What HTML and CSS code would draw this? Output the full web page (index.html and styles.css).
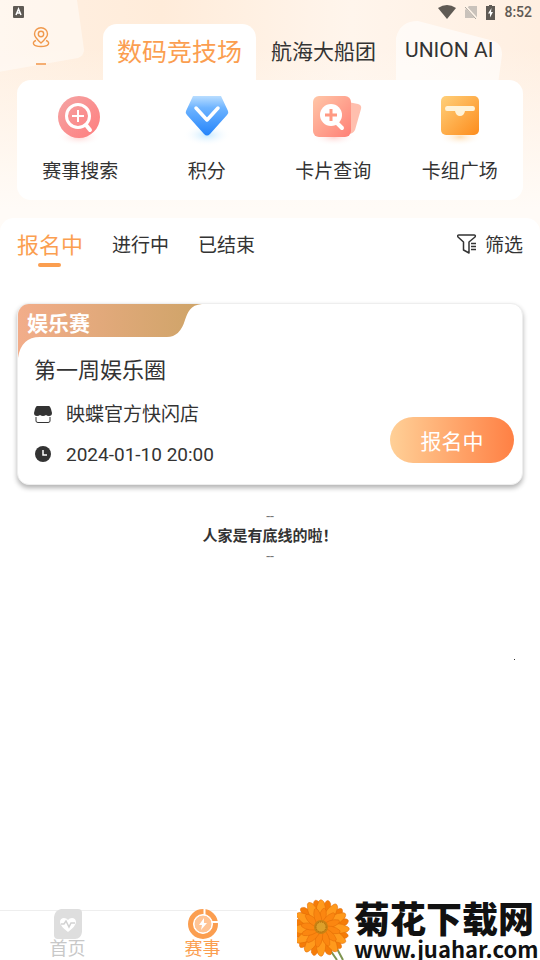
FILE: index.html
```html
<!DOCTYPE html>
<html lang="zh-CN">
<head>
    <meta charset="UTF-8">
    <meta name="viewport" content="width=device-width, initial-scale=1.0">
    <title>赛事</title>
    <link rel="stylesheet" href="styles.css">
</head>
<body>

    <header class="header">
        <svg class="header-shapes" viewBox="0 0 540 220" preserveAspectRatio="none" aria-hidden="true">
            <path d="M0 0H77Q81 26 84 47Q84 53 78 55L0 68Z" fill="#fff" fill-opacity=".45"/>
            <path d="M396 80V36Q400 20 418 20L490 38Q502 40 502 52L498 80Z" fill="#fff" fill-opacity=".6"/>
        </svg>

        <div class="status-bar">
            <svg width="12" height="12" viewBox="0 0 12 12">
                <rect x="1" width="11" height="12" rx="1" fill="#5f5a54"/>
                <path d="M4 9L6.500 3L9 9M5 7H8" fill="none" stroke="#fff" stroke-width="1.500"/>
            </svg>
            <div class="status-right">
                <svg width="18" height="14" viewBox="0 0 18 14">
                    <path d="M0 3Q9-3 18 3L9 14Z" fill="#5f5a54"/>
                </svg>
                <svg width="12" height="14" viewBox="0 0 12 14">
                    <path d="M4 1H12V13H0V5Z" fill="#c9c2bb"/>
                    <path d="M0 1L12 14" stroke="#fff5ea" stroke-width="2.500"/>
                    <path d="M0 2L11 14" stroke="#a8a29b" stroke-width="1"/>
                </svg>
                <svg width="9" height="15" viewBox="0 0 9 15">
                    <path d="M3 0H6V1H9V15H0V1H3Z" fill="#5f5a54"/>
                    <path d="M5.500 3L2 8.500H4V12.500L7 7H5Z" fill="#fff"/>
                </svg>
                <span>8:52</span>
            </div>
        </div>

        <div class="top-row">
            <button class="location" type="button" aria-label="位置">
                <svg width="18" height="21" viewBox="0 0 18 21" fill="none" stroke="#f0994c" stroke-width="1.400">
                    <path d="M9 16C5 12.500 2.500 10 2.500 7A6.500 6.300 0 0 1 15.500 7C15.500 10 13 12.500 9 16Z"/>
                    <circle cx="9" cy="7" r="2.700"/>
                    <path d="M4 13.500C-.500 15 .500 19.500 9 19.500S18.500 15 14 13.500"/>
                </svg>
                <span class="location-line"></span>
            </button>
            <nav class="shops">
                <button class="shop active" type="button">数码竞技场</button>
                <button class="shop" type="button">航海大船团</button>
                <button class="shop" type="button">UNION AI</button>
            </nav>
        </div>

        <div class="actions">
            <a class="action" href="#">
                <svg width="50" height="50" viewBox="0 0 50 50">
                    <defs>
                        <linearGradient id="red" x1="0" y1="0" x2="1" y2="1">
                            <stop offset="0" stop-color="#f4a5a5"/>
                            <stop offset="1" stop-color="#ff7d7d"/>
                        </linearGradient>
                        <radialGradient id="redGlow">
                            <stop offset="0" stop-color="#ffd3d0"/>
                            <stop offset="1" stop-color="#fff" stop-opacity="0"/>
                        </radialGradient>
                    </defs>
                    <ellipse cx="24" cy="41" rx="22" ry="9" fill="url(#redGlow)"/>
                    <circle cx="24" cy="21" r="21" fill="url(#red)"/>
                    <circle cx="23" cy="20" r="11.500" fill="none" stroke="#fff" stroke-width="3"/>
                    <path d="M31 29L35 34" stroke="#fff" stroke-width="4" stroke-linecap="round"/>
                    <path d="M17 20H29M23 14V26" stroke="#fff" stroke-width="2"/>
                </svg>
                <span>赛事搜索</span>
            </a>
            <a class="action" href="#">
                <svg width="50" height="50" viewBox="0 0 50 50">
                    <defs>
                        <linearGradient id="blue" x1="0" y1="0" x2="0" y2="1">
                            <stop offset="0" stop-color="#b9ddff"/>
                            <stop offset=".3" stop-color="#6eb4ff"/>
                            <stop offset="1" stop-color="#2484fb"/>
                        </linearGradient>
                        <radialGradient id="blueGlow">
                            <stop offset="0" stop-color="#c4e8ff"/>
                            <stop offset="1" stop-color="#fff" stop-opacity="0"/>
                        </radialGradient>
                    </defs>
                    <ellipse cx="25" cy="39" rx="24" ry="11" fill="url(#blueGlow)"/>
                    <path d="M11 0H39L46 15Q47 17 45 19L28 38Q25 41 22 38L5 19Q3 17 4 15Z" fill="url(#blue)"/>
                    <path d="M14 12L25 24L36 12" fill="none" stroke="#fff" stroke-width="3.500" stroke-linecap="round" stroke-linejoin="round"/>
                </svg>
                <span>积分</span>
            </a>
            <a class="action" href="#">
                <svg width="50" height="50" viewBox="0 0 50 50">
                    <defs>
                        <linearGradient id="coral" x1="0" y1="0" x2="1" y2="1">
                            <stop offset="0" stop-color="#ffc7a8"/>
                            <stop offset="1" stop-color="#ff7f76"/>
                        </linearGradient>
                    </defs>
                    <ellipse cx="26" cy="41" rx="22" ry="9" fill="url(#redGlow)"/>
                    <path d="M40 6L50 8Q54 9 53 13L47 34Q45 38 40 38Z" fill="#ffbfae"/>
                    <rect x="5" width="38" height="41" rx="6" fill="url(#coral)"/>
                    <circle cx="23" cy="19" r="11" fill="#fff"/>
                    <path d="M29 27L34 32" stroke="#fff" stroke-width="4" stroke-linecap="round"/>
                    <path d="M17 19H29M23 13V25" stroke="#ff9a83" stroke-width="3"/>
                </svg>
                <span>卡片查询</span>
            </a>
            <a class="action" href="#">
                <svg width="50" height="50" viewBox="0 0 50 50">
                    <defs>
                        <linearGradient id="amber" x1="0" y1="0" x2="1" y2="1">
                            <stop offset="0" stop-color="#ffd07a"/>
                            <stop offset="1" stop-color="#fd8c1c"/>
                        </linearGradient>
                        <radialGradient id="amberGlow">
                            <stop offset="0" stop-color="#ffdfb5"/>
                            <stop offset="1" stop-color="#fff" stop-opacity="0"/>
                        </radialGradient>
                    </defs>
                    <ellipse cx="25" cy="41" rx="22" ry="9" fill="url(#amberGlow)"/>
                    <rect x="6" width="38" height="39" rx="5" fill="url(#amber)"/>
                    <path d="M12 10H38Q40 10 40 12.500T38 15H30Q29 20 25 20T20 15H12Q10 15 10 12.500T12 10Z" fill="#fff3d8"/>
                </svg>
                <span>卡组广场</span>
            </a>
        </div>
    </header>

    <main class="content">
        <div class="filter-row">
            <button class="tab active" type="button">报名中</button>
            <button class="tab" type="button">进行中</button>
            <button class="tab" type="button">已结束</button>
            <button class="filter" type="button">
                <svg width="20" height="22" viewBox="0 -2 20 22" fill="none" stroke="#333" stroke-width="1.500" stroke-linejoin="round">
                    <path d="M2 1H17Q19 1 18 3L12 8V19L6.500 16V8L1 3Q0 1 2 1Z"/>
                    <path d="M14 9.500H19M14 12.500H19M14 15.500H19"/>
                </svg>
                筛选
            </button>
        </div>

        <article class="card">
            <svg class="ribbon" width="184" height="54" viewBox="0 0 184 54" aria-hidden="true">
                <defs>
                    <linearGradient id="ribbon">
                        <stop offset="0" stop-color="#f2ad8a"/>
                        <stop offset="1" stop-color="#cea468"/>
                    </linearGradient>
                </defs>
                <path d="M0 0H184C172 1 170 8 167 16Q162 33 149 33H22Q3 33 0 54Z" fill="url(#ribbon)"/>
            </svg>
            <div class="card-type">娱乐赛</div>
            <h2>第一周娱乐圈</h2>
            <div class="card-bottom">
                <div class="card-info">
                    <p>
                        <svg width="18" height="18" viewBox="0 0 18 18">
                            <path d="M3 0H15Q16 0 17 3L18 7Q18 10 15 10Q13 10 12 9Q9 11 6 9Q5 10 3 10Q0 10 0 7L1 3Q2 0 3 0Z" fill="#333"/>
                            <path d="M2 11V15Q2 16.500 4 16.500H14Q16 16.500 16 15V11" fill="none" stroke="#333"/>
                        </svg>
                        映蝶官方快闪店
                    </p>
                    <p>
                        <svg width="18" height="18" viewBox="0 0 18 18">
                            <circle cx="9" cy="8" r="8" fill="#333"/>
                            <path d="M9 4V9H13" fill="none" stroke="#fff" stroke-width="1.500"/>
                        </svg>
                        2024-01-10 20:00
                    </p>
                </div>
                <button class="join" type="button">报名中</button>
            </div>
        </article>

        <div class="list-end">
            <span>--</span>
            <strong>人家是有底线的啦！</strong>
            <span>--</span>
        </div>
    </main>

    <span class="drag-dot"></span>

    <footer class="tab-bar">
        <a class="tab-item" href="#">
            <svg width="30" height="30" viewBox="0 0 30 30">
                <path d="M8 0H25Q29 0 29 4V23Q28 30 22 30H5Q1 30 1 26V8Q2 1 8 0Z" fill="#dedede"/>
                <path d="M15 23Q7 17 7 13C7 8 13 8 15 11C17 8 23 8 23 13Q23 17 15 23Z" fill="#fff"/>
                <path d="M8 15H11L13 12L16 18L18 14H22" fill="none" stroke="#d2d2d2" stroke-width="1.500"/>
            </svg>
            首页
        </a>
        <a class="tab-item active" href="#">
            <svg width="30" height="30" viewBox="0 0 30 30">
                <circle cx="15" cy="15" r="12.500" fill="none" stroke="#fb9e50" stroke-width="5"/>
                <path d="M16.500 0V9M21 13H30" stroke="#fff" stroke-width="2"/>
                <circle cx="15" cy="15" r="9" fill="#ffc495" stroke="#fff"/>
                <path d="M16 9L11 16H14L13 21L19 14H16Z" fill="#fff"/>
            </svg>
            赛事
        </a>
        <div class="watermark">
            <svg width="56" height="63" viewBox="0 0 56 63" aria-hidden="true">
                <defs>
                    <path id="petal" d="M22 31Q16 14 22 4Q24 1 27 5Q31 16 26 31Z"/>
                    <g id="ring">
                        <use href="#petal"/>
                        <use href="#petal" transform="rotate(33 24 31)"/>
                        <use href="#petal" transform="rotate(60 24 31)"/>
                        <use href="#petal" transform="rotate(92 24 31)"/>
                        <use href="#petal" transform="rotate(120 24 31)"/>
                        <use href="#petal" transform="rotate(146 24 31)"/>
                        <use href="#petal" transform="rotate(180 24 31)"/>
                        <use href="#petal" transform="rotate(213 24 31)"/>
                        <use href="#petal" transform="rotate(240 24 31)"/>
                        <use href="#petal" transform="rotate(267 24 31)"/>
                        <use href="#petal" transform="rotate(300 24 31)"/>
                        <use href="#petal" transform="rotate(334 24 31)"/>
                    </g>
                </defs>
                <path d="M31 50L40 63M38 48L46 63" stroke="#7d9450" stroke-width="2"/>
                <g stroke="#e06a05" stroke-width=".5">
                    <use href="#ring" fill="#f57c08" transform="rotate(15 24 31)"/>
                    <use href="#ring" fill="#ff9a1c"/>
                </g>
                <g fill="#fb8610" stroke="#e06a05" stroke-width=".7" transform="translate(7 9) scale(.7)">
                    <use href="#ring" transform="rotate(10 24 31)"/>
                </g>
                <circle cx="24" cy="30" r="7" fill="#c98213"/>
                <circle cx="24" cy="30" r="5" fill="#dda02a" stroke="#a9680c" stroke-dasharray="1 1"/>
            </svg>
            <div class="watermark-text">
                <b>菊花下载网</b>
                <span>www.juahar.com</span>
            </div>
        </div>
    </footer>

</body>
</html>
```

FILE: styles.css
```css
* {
    box-sizing: border-box;
}

body {
    margin: 0;
    min-height: 100vh;
    display: flex;
    flex-direction: column;
    position: relative;
    background-color: #fff;
    color: #333;
    font-family: Roboto, "Noto Sans CJK SC", sans-serif;
    font-size: 19px;
}

button {
    padding: 0;
    border: none;
    background: none;
    color: inherit;
    font: inherit;
    white-space: nowrap;
    cursor: pointer;
}

a {
    color: inherit;
    text-decoration: none;
}

svg {
    flex-shrink: 0;
}

/* Header */
.header {
    position: relative;
    padding-bottom: 32px;
    background: linear-gradient(to bottom, rgba(255, 251, 247, 0) 20%, #fffbf7 90%),
        linear-gradient(to right, #fff0e2, #ffecda 30%, #fff5ec 65%, #ffefe1);
}

.header-shapes {
    position: absolute;
    top: 0;
    left: 0;
    width: 100%;
    height: 100%;
}

.status-bar {
    position: relative;
    display: flex;
    justify-content: space-between;
    align-items: center;
    height: 24px;
    padding: 0 8px 0 12px;
    color: #5f5a54;
    font-size: 14px;
    font-weight: 500;
}

.status-right {
    display: flex;
    align-items: center;
    gap: 9px;
}

.top-row {
    position: relative;
    display: flex;
    height: 56px;
    padding: 0 48px 0 17px;
}

.location {
    display: flex;
    flex-direction: column;
    align-items: center;
    gap: 15px;
    width: 86px;
    padding: 3px 38px 0 0;
    flex-shrink: 0;
}

.location-line {
    width: 10px;
    height: 2px;
    background-color: #f5ae72;
}

.shops {
    display: flex;
    gap: 1px;
    flex: 1;
    overflow: hidden;
}

.shop {
    padding: 0 14px 4px;
    flex-shrink: 0;
    font-size: 21px;
}

.shop.active {
    border-radius: 14px 14px 0 0;
    background-color: #fff;
    color: #fb9e50;
    font-size: 25px;
}

.actions {
    position: relative;
    display: grid;
    grid-template-columns: repeat(4, 1fr);
    margin: 0 17px;
    padding: 16px 0 14px;
    border-radius: 14px;
    background-color: #fff;
}

.action {
    display: flex;
    flex-direction: column;
    align-items: center;
    gap: 12px;
    line-height: 28px;
}

.action svg {
    overflow: visible;
}

/* Match list */
.content {
    position: relative;
    margin-top: -14px;
    padding: 11px 17px;
    border-radius: 14px 14px 0 0;
    background-color: #fff;
}

.filter-row {
    display: flex;
    align-items: center;
    gap: 29px;
    height: 28px;
}

.tab.active {
    position: relative;
    color: #fb9e50;
    font-size: 22px;
}

.tab.active::after {
    content: "";
    position: absolute;
    left: 21px;
    bottom: -8px;
    width: 23px;
    height: 4px;
    border-radius: 2px;
    background-color: #fb9e50;
}

.filter {
    display: flex;
    align-items: center;
    gap: 8px;
    margin-left: auto;
}

.card {
    position: relative;
    margin-top: 46px;
    padding: 5px 8px 9px 16px;
    border: 1px solid #eee;
    border-radius: 12px;
    background-color: #fff;
    box-shadow: 0 3px 5px rgba(0, 0, 0, 0.3);
    overflow: hidden;
}

.ribbon {
    position: absolute;
    top: 0;
    left: 0;
}

.card-type {
    position: relative;
    margin-left: -7px;
    color: #fff;
    font-size: 21px;
    font-weight: bold;
    line-height: 30px;
}

.card h2 {
    margin: 16px 0 8px;
    font-size: 22px;
    font-weight: normal;
    line-height: 32px;
}

.card-bottom {
    display: flex;
    justify-content: space-between;
    align-items: flex-end;
}

.card-info p {
    display: flex;
    align-items: center;
    gap: 14px;
    margin: 0;
    line-height: 40px;
}

.join {
    width: 124px;
    height: 46px;
    margin-bottom: 12px;
    border-radius: 23px;
    background: linear-gradient(to right, #ffd097, #ff8044);
    color: #fff;
    font-size: 21px;
}

.list-end {
    display: flex;
    flex-direction: column;
    align-items: center;
    margin-top: 21px;
    font-size: 15px;
    line-height: 20px;
}

.list-end span {
    color: #777;
    font-size: 14px;
}

.drag-dot {
    position: absolute;
    top: 659px;
    right: 25px;
    width: 1px;
    height: 1px;
    background-color: #333;
}

/* Bottom bar */
.tab-bar {
    position: relative;
    display: grid;
    grid-template-columns: repeat(4, 1fr);
    height: 50px;
    margin-top: auto;
    border-top: 1px solid #eee;
    background-color: #fff;
}

.tab-item {
    display: flex;
    flex-direction: column;
    align-items: center;
    margin-top: -2px;
    color: #c8c8c8;
    font-size: 18px;
    line-height: 20px;
}

.tab-item.active {
    color: #fb9e50;
}

.watermark {
    position: absolute;
    right: 0;
    bottom: 0;
    display: flex;
    width: 243px;
    height: 63px;
    background-color: #fff;
    color: #111;
}

.watermark-text {
    display: flex;
    flex-direction: column;
    padding-left: 1px;
    font-family: "Noto Sans CJK SC", sans-serif;
    font-weight: bold;
    white-space: nowrap;
}

.watermark-text b {
    font-size: 36px;
    line-height: 40px;
}

.watermark-text span {
    font-size: 22px;
    line-height: 22px;
}
```
